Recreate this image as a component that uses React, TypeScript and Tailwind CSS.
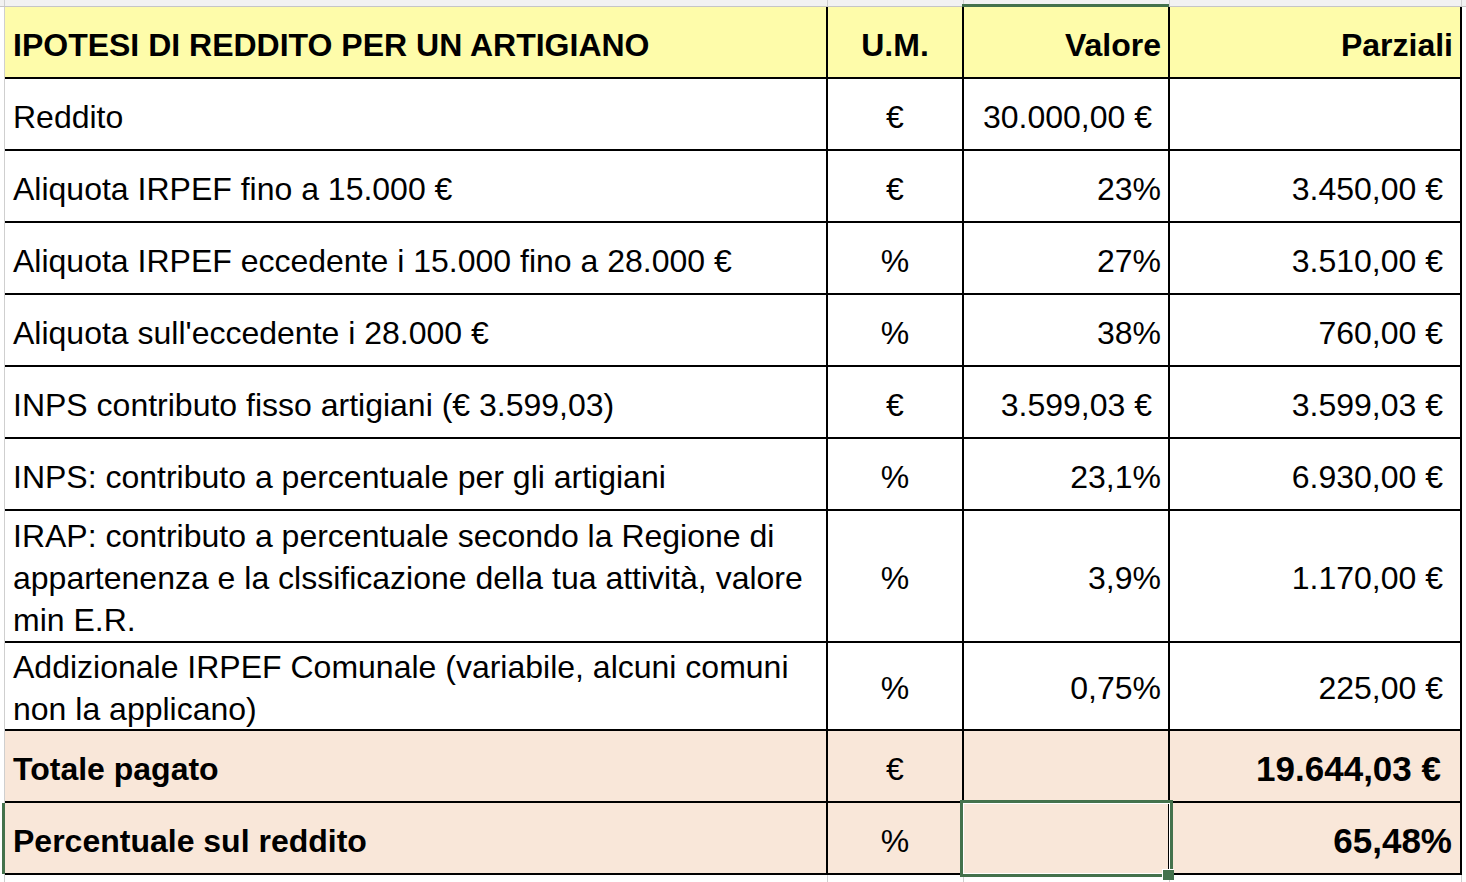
import React from "react";

type Row = {
  label: React.ReactNode;
  um: string;
  valore: string;
  valorePad?: "acc" | "pct";
  parz: string;
  h: string;
};

const rows: Row[] = [
  { label: "Reddito", um: "€", valore: "30.000,00 €", valorePad: "acc", parz: "", h: "h-[72px] pt-[6px]" },
  { label: "Aliquota IRPEF fino a 15.000 €", um: "€", valore: "23%", valorePad: "pct", parz: "3.450,00 €", h: "h-[72px] pt-[6px]" },
  { label: "Aliquota IRPEF eccedente i 15.000 fino a 28.000 €", um: "%", valore: "27%", valorePad: "pct", parz: "3.510,00 €", h: "h-[72px] pt-[6px]" },
  { label: "Aliquota sull'eccedente i 28.000 €", um: "%", valore: "38%", valorePad: "pct", parz: "760,00 €", h: "h-[72px] pt-[6px]" },
  { label: "INPS contributo fisso artigiani (€ 3.599,03)", um: "€", valore: "3.599,03 €", valorePad: "acc", parz: "3.599,03 €", h: "h-[72px] pt-[6px]" },
  { label: "INPS: contributo a percentuale per gli artigiani", um: "%", valore: "23,1%", valorePad: "pct", parz: "6.930,00 €", h: "h-[72px] pt-[6px]" },
  {
    label: (
      <>
        IRAP: contributo a percentuale secondo la Regione di
        <br />
        appartenenza e la clssificazione della tua attività, valore
        <br />
        min E.R.
      </>
    ),
    um: "%",
    valore: "3,9%",
    valorePad: "pct",
    parz: "1.170,00 €",
    h: "h-[132px] pt-[3px]",
  },
  {
    label: (
      <>
        Addizionale IRPEF Comunale (variabile, alcuni comuni
        <br />
        non la applicano)
      </>
    ),
    um: "%",
    valore: "0,75%",
    valorePad: "pct",
    parz: "225,00 €",
    h: "h-[88px] pt-[4px]",
  },
];

export default function App() {
  return (
    <div
      className="relative w-[1466px] h-[882px] overflow-hidden bg-white text-black"
      style={{ fontFamily: '"Liberation Sans", Arial, sans-serif' }}
    >
      {/* top strip */}
      <div className="flex h-[7px] bg-[#f2f2f2] border-b border-[#c6c6c6]">
        <div className="w-[5px] border-r border-[#d0d0d0]" />
        <div className="w-[823px] border-r border-[#d0d0d0]" />
        <div className="w-[136px] border-r border-[#d0d0d0]" />
        <div className="w-[206px] border-r border-[#d0d0d0]" />
        <div className="w-[292px] border-r border-[#d0d0d0]" />
      </div>

      <div className="flex">
        <div className="w-[5px] border-r border-[#cfcfcf]" />
        <div className="grid grid-cols-[823px_136px_206px_292px] text-[32px] leading-[42px]">
          {/* header */}
          <div className="h-[72px] pt-[5px] bg-[#fefcaa] border-b-2 border-r-2 border-black flex items-center pl-[8px] font-bold">
            IPOTESI DI REDDITO PER UN ARTIGIANO
          </div>
          <div className="h-[72px] pt-[5px] bg-[#fefcaa] border-b-2 border-r-2 border-black flex items-center justify-center font-bold">
            U.M.
          </div>
          <div className="h-[72px] pt-[5px] bg-[#fefcaa] border-b-2 border-r-2 border-black flex items-center justify-end pr-[7px] font-bold">
            Valore
          </div>
          <div className="h-[72px] pt-[5px] bg-[#fefcaa] border-b-2 border-r-2 border-black flex items-center justify-end pr-[7px] font-bold">
            Parziali
          </div>

          {rows.map((r, i) => (
            <React.Fragment key={i}>
              <div className={`${r.h} border-b-2 border-r-2 border-black flex items-center pl-[8px]`}>
                <div>{r.label}</div>
              </div>
              <div className={`${r.h} border-b-2 border-r-2 border-black flex items-center justify-center`}>
                {r.um}
              </div>
              <div
                className={`${r.h} border-b-2 border-r-2 border-black flex items-center justify-end ${
                  r.valorePad === "acc" ? "pr-[16px]" : "pr-[7px]"
                }`}
              >
                {r.valore}
              </div>
              <div className={`${r.h} border-b-2 border-r-2 border-black flex items-center justify-end pr-[17px]`}>
                {r.parz}
              </div>
            </React.Fragment>
          ))}

          {/* totale */}
          <div className="h-[72px] pt-[6px] bg-[#f9e7d9] border-b-2 border-r-2 border-black flex items-center pl-[8px] font-bold">
            Totale pagato
          </div>
          <div className="h-[72px] pt-[6px] bg-[#f9e7d9] border-b-2 border-r-2 border-black flex items-center justify-center">
            €
          </div>
          <div className="h-[72px] bg-[#f9e7d9] border-b-2 border-r-2 border-black" />
          <div className="h-[72px] pt-[5px] bg-[#f9e7d9] border-b-2 border-r-2 border-black flex items-center justify-end pr-[19px] font-bold text-[35px]">
            19.644,03 €
          </div>

          {/* percentuale */}
          <div className="h-[72px] pt-[6px] bg-[#f9e7d9] border-b-2 border-r-2 border-black flex items-center pl-[8px] font-bold">
            Percentuale sul reddito
          </div>
          <div className="h-[72px] pt-[6px] bg-[#f9e7d9] border-b-2 border-r-2 border-black flex items-center justify-center">
            %
          </div>
          <div className="h-[72px] bg-[#f9e7d9] border-b-2 border-r-2 border-black" />
          <div className="h-[72px] pt-[5px] bg-[#f9e7d9] border-b-2 border-r-2 border-black flex items-center justify-end pr-[8px] font-bold text-[35px]">
            65,48%
          </div>
        </div>
        <div className="flex-1" />
      </div>

      {/* bottom gridlines */}
      <div className="flex h-[10px]">
        <div className="w-[5px] border-r border-[#cfcfcf]" />
        <div className="w-[823px] border-r border-[#cfcfcf]" />
        <div className="w-[136px] border-r border-[#cfcfcf]" />
        <div className="w-[206px] border-r border-[#cfcfcf]" />
        <div className="w-[292px] border-r border-[#cfcfcf]" />
      </div>

      {/* selection overlays */}
      <div className="absolute left-[962px] top-[4px] w-[207px] h-[3px] bg-[#44724c]" />
      <div className="absolute left-[2px] top-[803px] w-[3px] h-[71px] bg-[#44724c]" />
      <div className="absolute left-[960px] top-[800px] w-[213px] h-[77px] border-[3px] border-[#44724c]">
        <div className="w-full h-full border border-white" />
      </div>
      <div className="absolute left-[1162px] top-[869px] w-[12px] h-[11px] bg-[#44724c] border-l border-t border-white" />
    </div>
  );
}
